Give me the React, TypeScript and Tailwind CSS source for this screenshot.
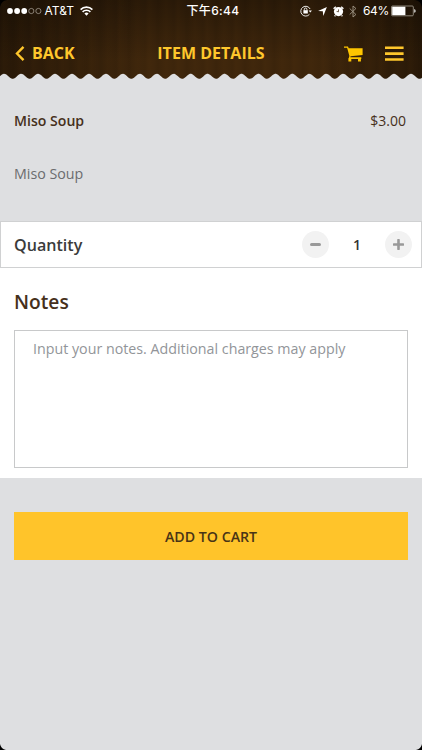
import React from "react";

const WAVE = 16.95;
const wavePath = () => {
  let d = "M0 8";
  for (let x = 0; x <= 422; x++) {
    const y = 3.3 - 2.5 * Math.cos(((x - 4.2) / WAVE) * Math.PI * 2);
    d += ` L${x} ${y.toFixed(2)}`;
  }
  return d + " L422 8 Z";
};

function StatusBar() {
  return (
    <div className="grid h-[22px] grid-cols-[1fr_auto_1fr] items-center pl-[7px] pr-[6px] text-white">
      <div className="flex items-center">
        <svg width="36" height="8" viewBox="0 0 36 8">
          <circle cx="3" cy="4" r="2.9" fill="#fff" />
          <circle cx="10.1" cy="4" r="2.9" fill="#fff" />
          <circle cx="17.2" cy="4" r="2.9" fill="#fff" />
          <circle cx="24.3" cy="4" r="2.6" fill="none" stroke="#c9c2b8" strokeWidth=".6" />
          <circle cx="31.4" cy="4" r="2.6" fill="none" stroke="#c9c2b8" strokeWidth=".6" />
        </svg>
        <span className="ml-[1.5px] w-[30px] whitespace-nowrap text-[12px] leading-4 tracking-[0.05px]">AT&amp;T</span>
        <svg className="ml-[5px]" width="13" height="10" viewBox="0 0 13 10" fill="none" stroke="#fff" strokeWidth="1.6">
          <path d="M.6 3.6a8.3 8.3 0 0 1 11.8 0M2.6 5.9a5.4 5.4 0 0 1 7.8 0" />
          <path d="M6.5 9.7 4.4 7.6a2.9 2.9 0 0 1 4.2 0Z" fill="#fff" stroke="none" />
        </svg>
      </div>
      <div className="whitespace-nowrap pl-[3px] text-[12px] font-medium leading-4 tracking-[0.35px]">下午6:44</div>
      <div className="flex items-center justify-end">
        <svg className="mr-[1px]" width="12" height="12" viewBox="0 0 12 12" fill="none" stroke="#fff">
          <path d="M10.1 4A4.9 4.9 0 1 0 9.4 9.4" strokeWidth=".9" />
          <path d="m8.6 5.4 1.7 2 1.6-2Z" fill="#fff" stroke="none" />
          <rect x="3.4" y="5.2" width="4.4" height="3.3" fill="#fff" stroke="none" />
          <path d="M4.3 5.5V4.3a1.3 1.3 0 0 1 2.6 0v1.2" strokeWidth=".9" />
        </svg>
        <svg className="ml-[5px]" width="9" height="9" viewBox="0 0 9 9">
          <path d="M8.9.1 5.3 8.9 4.8 4.3.1 4Z" fill="#fff" />
        </svg>
        <svg className="ml-[6px]" width="11" height="11" viewBox="0 0 11 11">
          <circle cx="5.5" cy="5.6" r="4.6" fill="#fff" />
          <path d="M.6 2.8 2.8.8M10.4 2.8 8.2.8M2.4 9.4l-.8.9M8.6 9.4l.8.9" stroke="#fff" strokeWidth="1.4" />
          <path d="M5.5 3.4v2.4l-1.9-.4" fill="none" stroke="#382108" strokeWidth=".7" />
        </svg>
        <svg className="ml-[5px]" width="8" height="13" viewBox="0 0 8 13">
          <path d="m.7 3.5 6.2 6L4 12V1l2.9 2.5-6.2 6" fill="none" stroke="#a19889" strokeWidth=".9" />
        </svg>
        <span className="ml-[6px] w-[26px] whitespace-nowrap text-[12px] leading-4 tracking-[-0.35px]">64%</span>
        <svg className="ml-[2px]" width="25" height="12" viewBox="0 0 25 12">
          <rect x=".5" y="1" width="21.8" height="9.8" rx="1" fill="none" stroke="#aaa397" strokeWidth=".8" />
          <rect x="1.2" y="1.7" width="13.2" height="8.4" fill="#fff" />
          <path d="M23.3 4v3.8q1.3-.5 1.3-1.9T23.3 4Z" fill="#fff" />
        </svg>
      </div>
    </div>
  );
}

export default function App() {
  return (
    <div className="relative flex h-[750px] w-[422px] flex-col overflow-hidden bg-[#dedfe1] font-['Open_Sans',sans-serif]">
      <header className="flex h-[80px] shrink-0 flex-col bg-[#40270c] bg-[repeating-linear-gradient(90deg,rgba(0,0,0,.05)_0px,rgba(90,55,15,.05)_4px,rgba(0,0,0,.02)_9px,rgba(0,0,0,.08)_13px,rgba(75,45,10,.05)_21px,rgba(0,0,0,.05)_29px),linear-gradient(180deg,rgba(0,0,0,.35),rgba(0,0,0,0)_75%),linear-gradient(90deg,rgba(0,0,0,.35),transparent_35%,transparent_75%,rgba(0,0,0,.35))]">
        <div className="font-[Inter,'Noto_Sans_CJK_SC',sans-serif]">
          <StatusBar />
        </div>
        <div className="grid h-[51px] grid-cols-[1fr_auto_1fr] items-center pt-[11px] pl-[15px] pr-[18px] text-[16px] font-bold leading-5 text-[#ffc72c]">
          <div className="flex items-center">
            <svg width="10" height="15" viewBox="0 0 10 15">
              <path d="M8.5.9 2 7.5l6.5 6.6" fill="none" stroke="currentColor" strokeWidth="2.4" />
            </svg>
            <span className="ml-[7px]">BACK</span>
          </div>
          <h1 className="whitespace-nowrap pl-[3px] tracking-[0.03px]">ITEM DETAILS</h1>
          <div className="flex items-center justify-end pt-px">
            <svg width="19" height="16" viewBox="0 0 19 16" fill="#ffc600">
              <path d="M0 .4h4l.7 1.9h13.9v6.8L6.6 10.2l-.3 1h11v1.7H4.5l.9-2.8L3.1 1.8H0Z" />
              <path d="M4.4 12.5h2.9v2.9H4.4zM14 12.5h2.9v2.9H14z" />
            </svg>
            <svg className="ml-[22px]" width="19" height="16" viewBox="0 0 19 16" fill="currentColor">
              <path d="M0 .5h18.6v2.6H0zM0 6.3h18.6v2.6H0zM0 12.2h18.6v2.6H0z" />
            </svg>
          </div>
        </div>
        <svg className="block shrink-0" width="422" height="7" viewBox="0 0 422 7">
          <path d={wavePath()} fill="#dedfe1" />
        </svg>
      </header>

      <section className="h-[141px] shrink-0 pt-[31px] pl-[14px] pr-[16px] text-[14px] leading-5">
        <div className="flex justify-between text-[#46301b]">
          <span className="text-[14.1px] font-semibold">Miso Soup</span>
          <span>$3.00</span>
        </div>
        <p className="mt-[33px] text-[14.25px] text-[#6b6c6e]">Miso Soup</p>
      </section>

      <section className="flex h-[47px] shrink-0 items-center justify-between border border-[#d0d1d2] bg-white pl-[13px] pr-[9px]">
        <span className="pt-px text-[16.1px] font-semibold leading-6 text-[#3b3b3b]">Quantity</span>
        <div className="flex items-center">
          <button className="flex size-[27px] items-center justify-center rounded-full bg-[#f2f2f2]">
            <span className="h-[3px] w-[11px] rounded-sm bg-[#999]" />
          </button>
          <span className="w-[56px] text-center text-[14px] font-semibold text-[#333]">1</span>
          <button className="flex size-[27px] items-center justify-center rounded-full bg-[#f2f2f2]">
            <svg width="11" height="11" viewBox="0 0 11 11">
              <path d="M5.5 1v9M1 5.5h9" stroke="#999" strokeWidth="2.6" strokeLinecap="round" />
            </svg>
          </button>
        </div>
      </section>

      <section className="h-[210px] shrink-0 bg-white px-[14px] pt-[20px]">
        <h2 className="text-[19.2px] font-semibold leading-7 text-[#46301b]">Notes</h2>
        <div className="mt-[14px] h-[138px] border border-[#c8c9ca] pt-[8px] pl-[18px] text-[14.25px] leading-5 text-[#929599]">
          Input your notes. Additional charges may apply
        </div>
      </section>

      <div className="px-[14px] pt-[34px]">
        <button className="h-[48px] w-full bg-[#ffc42a] pt-px text-[14.2px] font-semibold text-[#493416]">ADD TO CART</button>
      </div>
      <svg className="pointer-events-none absolute inset-0" width="422" height="750" viewBox="0 0 422 750">
        <path d="M0 0h7Q1 1 0 7ZM422 0h-7q6 1 7 7ZM0 750v-6q1 5 6 6ZM422 750v-6q-1 5-6 6Z" fill="#000" />
      </svg>
    </div>
  );
}
